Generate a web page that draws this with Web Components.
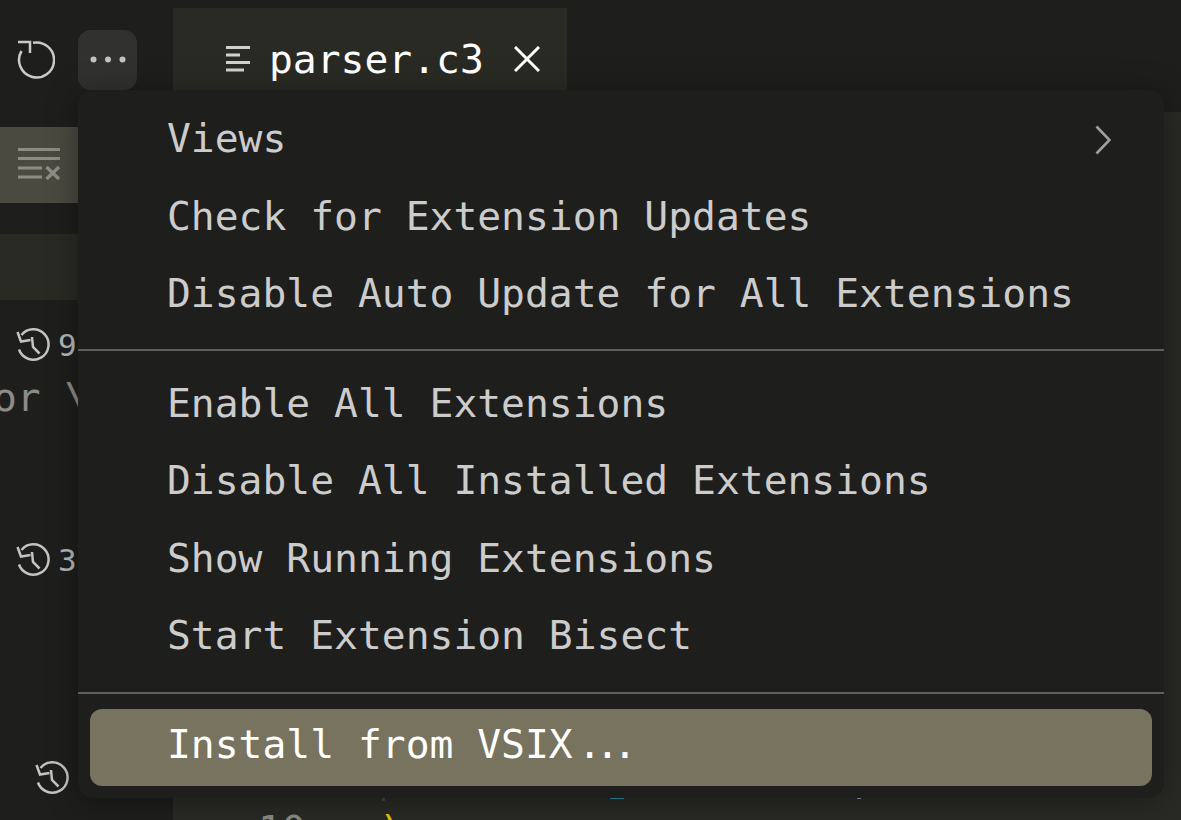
<!DOCTYPE html>
<html>
<head>
<title>Extensions menu</title>
<style>
  html, body { margin: 0; height: 100%; background: #1e1e1c; overflow: hidden; }
</style>
</head>
<body>

<template id="ide-shell-tpl">
  <style>
    :host {
      display: flex;
      position: relative;
      width: 1181px;
      height: 820px;
      overflow: hidden;
      background: #1e1e1c;
      color: #cccccc;
      font-family: "DejaVu Sans Mono", monospace;
    }
    #side { width: 173px; flex: none; display: flex; flex-direction: column; }
    #main { flex: 1; display: flex; flex-direction: column; }
  </style>
  <div id="side"><slot name="side"></slot></div>
  <div id="main"><slot name="main"></slot></div>
  <slot name="overlay"></slot>
</template>

<template id="side-bar-tpl">
  <style>
    :host { display: flex; flex-direction: column; height: 100%; font-size: 31px; color: #b4b8bc; }
    svg { display: block; flex: none; fill: none; stroke: currentColor; }
    #actions { height: 127px; display: flex; align-items: flex-start; padding: 30px 0 0 15px; box-sizing: border-box; gap: 23px; }
    #more { width: 59px; height: 60px; border-radius: 13px; background: #313130; display: flex; align-items: center; justify-content: center; }
    #toolbar { height: 76px; background: #4a4a41; padding: 18px 0 0 17px; box-sizing: border-box; }
    #gap { height: 31px; }
    #row { height: 66px; background: #2a2a25; }
    .hist { display: flex; align-items: center; gap: 8px; padding-left: 16px; height: 40px; line-height: 40px; }
    #h9 { margin-top: 25px; }
    #desc { height: 48px; line-height: 48px; font-size: 39.65px; color: #8c8c86; margin-left: -7px; white-space: pre; margin-top: 8px; }
    #h3 { margin-top: 119px; }
    #h0 { margin-top: 178px; padding-left: 35px; }
  </style>
  <div id="actions">
    <svg width="40" height="40" viewBox="0 0 40 40" style="color:#c9c9c9;margin-top:9px" stroke-width="2.5">
      <path d="M6.500 12 A17.500 17.500 0 1 0 18 3.800"/><path d="M3 3 H15 V14"/>
    </svg>
    <div id="more">
      <svg width="40" height="12" viewBox="0 0 40 12" style="stroke:none;fill:#bfc3c6"><circle cx="5.5" cy="5.5" r="3"/><circle cx="20" cy="5.5" r="3"/><circle cx="34.5" cy="5.500" r="3"/></svg>
    </div>
  </div>
  <div id="toolbar">
    <svg width="44" height="36" viewBox="0 0 44 36" stroke="#8d8d86" stroke-width="3" style="color:#8d8d86">
      <path d="M1 4.500 H43 M1 13.500 H43 M1 23 H25 M1 32 H25"/>
      <path d="M29.500 22 L42 34 M42 22 L29.500 34" stroke-width="3.400"/>
    </svg>
  </div>
  <div id="gap"></div>
  <div id="row"></div>
  <div class="hist" id="h9"><history-icon></history-icon><span>9</span></div>
  <div id="desc">or \</div>
  <div class="hist" id="h3"><history-icon></history-icon><span>3</span></div>
  <div class="hist" id="h0"><history-icon></history-icon></div>
</template>

<template id="history-icon-tpl">
  <style>
    :host { display: block; width: 34px; height: 34px; flex: none; color: #c4c4c4; }
    svg { display: block; fill: none; stroke: currentColor; stroke-width: 2.5; }
  </style>
  <svg width="34" height="34" viewBox="0 0 34 34">
    <path d="M5.500 7 A15.200 15.200 0 1 1 3 21.500"/>
    <path d="M1.500 4 L5 13.500 L14.500 12"/>
    <path d="M16 9 L17 19 L23.500 25.500"/>
  </svg>
</template>

<template id="editor-pane-tpl">
  <style>
    :host { display: flex; flex-direction: column; height: 100%; }
    #tabs { height: 90px; padding-top: 8px; box-sizing: border-box; display: flex; }
    #tab { width: 394px; background: #2a2a25; display: flex; align-items: center; color: #fff; font-size: 39.65px; padding: 20px 0 0 53px; box-sizing: border-box; white-space: pre; }
    #tab svg { display: block; flex: none; fill: none; stroke: #d0d0d0; stroke-width: 3; }
    #name { margin-left: 19px; }
    #close { margin-left: 30px; stroke: #fff !important; }
    #crumbs { height: 22px; flex: none; }
    #body { flex: 1; background: #2a2a25; position: relative; overflow: hidden; padding: 694px 0 0 85px; box-sizing: border-box; font-size: 39.65px; line-height: 48px; color: #8c8c86; white-space: pre; }
    #paren { color: #e8c400; margin-left: 73px; }
    .bit { position: absolute; display: block; }
  </style>
  <div id="tabs">
    <div id="tab">
      <svg width="24" height="26" viewBox="0 0 24 26"><path d="M0 1.500 H24 M0 9 H14 M0 16.500 H24 M0 24 H18"/></svg>
      <span id="name">parser.c3</span>
      <svg id="close" width="26" height="26" viewBox="0 0 26 26"><path d="M1 1 L25 25 M25 1 L1 25"/></svg>
    </div>
  </div>
  <div id="crumbs"></div>
  <div id="body"><span>10</span><span id="paren">)</span><i class="bit" style="left:209px;top:686px;width:3px;height:3px;background:#44443f"></i><i class="bit" style="left:437px;top:685.5px;width:14px;height:1.5px;background:#2b8ea5"></i><i class="bit" style="left:684px;top:685.5px;width:4px;height:1.5px;background:#88a0a0"></i></div>
</template>

<template id="context-menu-tpl">
  <style>
    :host {
      position: absolute;
      left: 78px; top: 90px;
      width: 1086px; height: 708px;
      box-sizing: border-box;
      padding: 14px 12px 12px;
      background: #1e1e1c;
      border-radius: 15px;
      box-shadow: 0 4px 32px rgba(0,0,0,.36);
      display: flex; flex-direction: column;
    }
  </style>
  <slot></slot>
</template>

<template id="menu-item-tpl">
  <style>
    :host {
      display: flex; align-items: center;
      height: 77.5px; flex: none;
      padding: 0 41px 9px 77px;
      box-sizing: border-box;
      font-size: 39.65px;
      color: #cccccc;
      border-radius: 12px;
      white-space: nowrap;
    }
    :host([active]) { background: #78735f; color: #fff; height: 77px; padding-bottom: 6px; }
    #label { flex: 1; white-space: pre; }
    svg { display: none; fill: none; stroke: #a0a0a0; stroke-width: 2.6; margin-top: 4px; }
    :host([submenu]) svg { display: block; }
  </style>
  <span id="label"><slot></slot></span>
  <svg width="16" height="30" viewBox="0 0 16 30"><path d="M1.500 1.500 L14.500 15 L1.500 28.500"/></svg>
</template>

<template id="menu-sep-tpl">
  <style>
    :host { display: block; height: 2px; background: #5f5f5d; margin: var(--sep-before, 12px) -12px var(--sep-after, 18px); flex: none; }
  </style>
</template>

<template id="dots-text-tpl">
  <style>
    :host { display: inline-block; letter-spacing: -6.200px; padding-left: 5px; white-space: nowrap; }
  </style>
  <slot></slot>
</template>

<ide-shell>
  <side-bar slot="side"></side-bar>
  <editor-pane slot="main"></editor-pane>
  <context-menu slot="overlay">
    <menu-item submenu>Views</menu-item>
    <menu-item>Check for Extension Updates</menu-item>
    <menu-item>Disable Auto Update for All Extensions</menu-item>
    <menu-sep></menu-sep>
    <menu-item>Enable All Extensions</menu-item>
    <menu-item>Disable All Installed Extensions</menu-item>
    <menu-item>Show Running Extensions</menu-item>
    <menu-item>Start Extension Bisect</menu-item>
    <menu-sep style="--sep-before:13px;--sep-after:15px"></menu-sep>
    <menu-item active>Install from VSIX<dots-text>...</dots-text></menu-item>
  </context-menu>
</ide-shell>

<script>
  function plain(tag, tplId) {
    customElements.define(tag, class extends HTMLElement {
      constructor() {
        super();
        const root = this.attachShadow({ mode: "open" });
        root.appendChild(document.getElementById(tplId).content.cloneNode(true));
      }
    });
  }
  plain("ide-shell", "ide-shell-tpl");
  plain("side-bar", "side-bar-tpl");
  plain("history-icon", "history-icon-tpl");
  plain("editor-pane", "editor-pane-tpl");
  plain("context-menu", "context-menu-tpl");
  plain("menu-item", "menu-item-tpl");
  plain("menu-sep", "menu-sep-tpl");
  plain("dots-text", "dots-text-tpl");
</script>
</body>
</html>
